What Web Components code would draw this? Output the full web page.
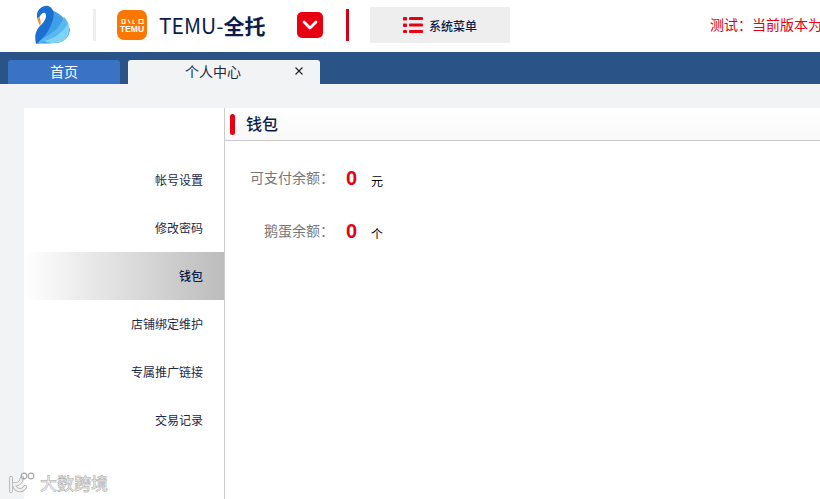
<!DOCTYPE html>
<html lang="zh">
<head>
<meta charset="utf-8">
<title>个人中心</title>
<style>
    html, body { margin: 0; height: 100%; overflow: hidden; background: #f2f3f5; }
    body { font-family: "Noto Sans CJK SC", "Liberation Sans", sans-serif; display: flex; flex-direction: column; }
</style>
</head>
<body>
<app-header></app-header>
<tab-bar>
    <tab-item type="home">首页</tab-item>
    <tab-item type="active" closable>个人中心</tab-item>
</tab-bar>
<page-body>
    <side-nav slot="nav">
        <nav-item>帐号设置</nav-item>
        <nav-item>修改密码</nav-item>
        <nav-item active>钱包</nav-item>
        <nav-item>店铺绑定维护</nav-item>
        <nav-item>专属推广链接</nav-item>
        <nav-item>交易记录</nav-item>
    </side-nav>
    <wallet-panel heading="钱包">
        <balance-row label="可支付余额：" value="0" unit="元"></balance-row>
        <balance-row label="鹅蛋余额：" value="0" unit="个"></balance-row>
    </wallet-panel>
</page-body>
<water-mark></water-mark>

<script>
class AppHeader extends HTMLElement {
    constructor() {
        super();
        this.attachShadow({ mode: 'open' });
        this.shadowRoot.innerHTML = `
            <style>
                :host {
                    display: flex;
                    align-items: center;
                    flex: none;
                    box-sizing: border-box;
                    height: 52px;
                    padding-bottom: 2px;
                    background: #fff;
                    overflow: hidden;
                    white-space: nowrap;
                }
                .swan { margin-left: 35px; width: 36px; height: 40px; flex: none; }
                .divider { margin-left: 22px; width: 3px; height: 32px; background: #eee; flex: none; }
                .temu {
                    margin-left: 21px;
                    width: 30px;
                    height: 30px;
                    flex: none;
                    border-radius: 7px;
                    background: #fb7701;
                    color: #fff;
                    display: flex;
                    flex-direction: column;
                    align-items: center;
                    justify-content: center;
                    padding-top: 2px;
                    box-sizing: border-box;
                    font: bold 8.5px/8px "Liberation Sans", sans-serif;
                }
                .temu svg { width: 23px; height: 5px; margin-bottom: 1px; }
                .brand { margin-left: 12px; font-size: 21px; line-height: 28px; color: #0d1c4a; width: 138px; flex: none; }
                .brand b { font-weight: 700; }
                .drop {
                    width: 26px;
                    height: 26px;
                    flex: none;
                    border-radius: 5px;
                    background: #e60012;
                    display: flex;
                    align-items: center;
                    justify-content: center;
                }
                .bar { margin-left: 23px; width: 3px; height: 32px; background: #d0021b; flex: none; }
                .menu {
                    margin-left: 21px;
                    width: 140px;
                    height: 36px;
                    flex: none;
                    background: #eee;
                    display: flex;
                    align-items: center;
                    box-sizing: border-box;
                    padding-left: 33px;
                    gap: 6px;
                    font-size: 12px;
                    font-weight: 500;
                    color: #0d1c4a;
                }
                .notice { margin: 0 0 2px 200px; font-size: 14px; color: #e60012; flex: none; }
            </style>
            <svg class="swan" viewBox="0 0 36 40">
                <path d="M14 4C24 7 33 15 35 25C34 33 28 38 20 38C13 39 7 38 1 39C8 30 18 20 14 4Z" fill="#3f9fe8"/>
                <path d="M8 36C18 34 29 27 33 17C36 26 33 34 26 37C20 39 13 38 8 36Z" fill="#7fd3f6"/>
                <path d="M4 36C13 30 24 26 29 12C31 14 32 16 33 18C29 27 18 33 4 38Z" fill="#5ab8f0"/>
                <path d="M4.5 12C6 16 6 18 5 21L2 13Z" fill="#f0883a"/>
                <path d="M2 9C3 4 8 0 13 1C19 3 20 10 17 17C15 25 8 34 1 39C-1 30 1 24 7 19C11 15 12 10 10 8C8 7 6 9 4.5 12L2 13Z" fill="#1a6fd0"/>
            </svg>
            <div class="divider"></div>
            <div class="temu">
                <svg viewBox="0 0 23 5"><path d="M1 .5h3v4H1zM7 .5l2 4M12 .5v4h2M18 .5h4v4h-4z" fill="none" stroke="#fff" stroke-width="1.1"/></svg>
                TEMU
            </div>
            <div class="brand">TEMU-<b>全托</b></div>
            <div class="drop">
                <svg width="16" height="10" viewBox="0 0 16 10"><path d="M2 2l6 6 6-6" fill="none" stroke="#fff" stroke-width="2.8" stroke-linecap="round" stroke-linejoin="round"/></svg>
            </div>
            <div class="bar"></div>
            <div class="menu">
                <svg width="20" height="16" viewBox="0 0 20 16" fill="#e60012">
                    <rect x="0" y="0" width="4" height="3.5" rx="1"/><rect x="6" y="0" width="14" height="3" rx="1"/>
                    <rect x="0" y="6.5" width="4" height="3.5" rx="1"/><rect x="6" y="6.5" width="14" height="3" rx="1"/>
                    <rect x="0" y="13" width="4" height="3" rx="1"/><rect x="6" y="13" width="14" height="3" rx="1"/>
                </svg>
                <span>系统菜单</span>
            </div>
            <div class="notice">测试：当前版本为</div>
        `;
    }
}

class TabBar extends HTMLElement {
    constructor() {
        super();
        this.attachShadow({ mode: 'open' });
        this.shadowRoot.innerHTML = `
            <style>
                :host {
                    display: flex;
                    align-items: flex-end;
                    flex: none;
                    height: 32px;
                    padding-left: 8px;
                    gap: 8px;
                    background: #2a5488;
                }
            </style>
            <slot></slot>
        `;
    }
}

class TabItem extends HTMLElement {
    constructor() {
        super();
        this.attachShadow({ mode: 'open' });
        this.shadowRoot.innerHTML = `
            <style>
                :host {
                    display: flex;
                    align-items: center;
                    justify-content: center;
                    position: relative;
                    box-sizing: border-box;
                    height: 24px;
                    width: 112px;
                    padding-bottom: 2px;
                    border-radius: 3px 3px 0 0;
                    background: #3a73c5;
                    color: #fff;
                    font-size: 14px;
                }
                :host([type="active"]) { width: 192px; padding-right: 22px; background: #f2f3f5; color: #1c2a4a; }
                .close { position: absolute; right: 14px; top: 4px; display: none; }
                :host([closable]) .close { display: block; }
            </style>
            <slot></slot>
            <svg class="close" width="14" height="14" viewBox="0 0 14 14"><path d="M3.5 3.5l7 7M10.5 3.5l-7 7" stroke="#222" stroke-width="1.1"/></svg>
        `;
    }
}

class PageBody extends HTMLElement {
    constructor() {
        super();
        this.attachShadow({ mode: 'open' });
        this.shadowRoot.innerHTML = `
            <style>
                :host {
                    display: flex;
                    flex: 1;
                    min-height: 0;
                    padding: 24px 0 0 24px;
                }
                .panel { display: flex; flex: 1; background: #fff; min-width: 0; }
            </style>
            <div class="panel">
                <slot name="nav"></slot>
                <slot></slot>
            </div>
        `;
    }
}

class SideNav extends HTMLElement {
    constructor() {
        super();
        this.attachShadow({ mode: 'open' });
        this.shadowRoot.innerHTML = `
            <style>
                :host {
                    display: flex;
                    flex-direction: column;
                    flex: none;
                    width: 200px;
                    padding-top: 48px;
                    border-right: 1px solid #ccc;
                }
            </style>
            <slot></slot>
        `;
    }
}

class NavItem extends HTMLElement {
    constructor() {
        super();
        this.attachShadow({ mode: 'open' });
        this.shadowRoot.innerHTML = `
            <style>
                :host {
                    display: flex;
                    align-items: center;
                    justify-content: flex-end;
                    box-sizing: border-box;
                    height: 48px;
                    padding: 0 21px 2px 0;
                    font-size: 12px;
                    color: #1c2a4a;
                }
                :host([active]) {
                    background: linear-gradient(to right, #fff, #bcbcbc);
                    font-weight: 500;
                    color: #0d1c4a;
                }
            </style>
            <slot></slot>
        `;
    }
}

class WalletPanel extends HTMLElement {
    constructor() {
        super();
        this.attachShadow({ mode: 'open' });
        this.shadowRoot.innerHTML = `
            <style>
                :host { display: block; flex: 1; min-width: 0; }
                .head {
                    display: flex;
                    align-items: center;
                    height: 32px;
                    border-bottom: 1px solid #ccc;
                    padding-left: 5px;
                    background: linear-gradient(to bottom, #fff, #f8f8f8);
                }
                .mark { width: 5px; height: 21px; border-radius: 3px; background: #e60012; flex: none; }
                h2 { margin: 0 0 2px 11px; font-size: 16px; font-weight: 500; color: #0d1c4a; }
                .rows { display: flex; flex-direction: column; gap: 21px; padding-top: 21px; }
            </style>
            <div class="head">
                <div class="mark"></div>
                <h2></h2>
            </div>
            <div class="rows"><slot></slot></div>
        `;
        this.shadowRoot.querySelector('h2').textContent = this.getAttribute('heading');
    }
}

class BalanceRow extends HTMLElement {
    constructor() {
        super();
        this.attachShadow({ mode: 'open' });
        this.shadowRoot.innerHTML = `
            <style>
                :host { display: flex; align-items: center; height: 32px; }
                .label { width: 109px; padding-bottom: 2px; text-align: right; font-size: 14px; color: #777; flex: none; }
                .value { margin-left: 12px; width: 25px; font: bold 20px "Liberation Sans", sans-serif; color: #e60012; flex: none; }
                .unit { font-size: 12px; color: #000; margin-top: 4px; }
            </style>
            <span class="label"></span><span class="value"></span><span class="unit"></span>
        `;
        this.shadowRoot.querySelector('.label').textContent = this.getAttribute('label');
        this.shadowRoot.querySelector('.value').textContent = this.getAttribute('value');
        this.shadowRoot.querySelector('.unit').textContent = this.getAttribute('unit');
    }
}

// stamp from the screenshot tool, it sits over the page
class WaterMark extends HTMLElement {
    constructor() {
        super();
        this.attachShadow({ mode: 'open' });
        this.shadowRoot.innerHTML = `
            <style>
                :host {
                    position: absolute;
                    left: 8px;
                    top: 471px;
                    display: flex;
                    align-items: center;
                    gap: 4px;
                    color: #ececec;
                    font-size: 17px;
                    line-height: 24px;
                    font-weight: 500;
                    -webkit-text-stroke: 0.5px #a8a8a8;
                }
            </style>
            <svg width="28" height="22" viewBox="0 0 28 22" fill="none" stroke-linecap="round">
                <path d="M3 6v13M14 6c-1 5-4 7-8 6M6 13c2 6 8 7 11 2" stroke="#b0b0b0" stroke-width="4"/>
                <path d="M3 6v13M14 6c-1 5-4 7-8 6M6 13c2 6 8 7 11 2" stroke="#f0f0f0" stroke-width="2.4"/>
                <circle cx="16" cy="4" r="2.8" stroke="#a8a8a8" stroke-width="1.2"/>
                <circle cx="23" cy="4" r="2.8" stroke="#a8a8a8" stroke-width="1.2"/>
            </svg>
            <span>大数跨境</span>
        `;
    }
}

customElements.define('app-header', AppHeader);
customElements.define('tab-bar', TabBar);
customElements.define('tab-item', TabItem);
customElements.define('page-body', PageBody);
customElements.define('side-nav', SideNav);
customElements.define('nav-item', NavItem);
customElements.define('wallet-panel', WalletPanel);
customElements.define('balance-row', BalanceRow);
customElements.define('water-mark', WaterMark);
</script>
</body>
</html>
